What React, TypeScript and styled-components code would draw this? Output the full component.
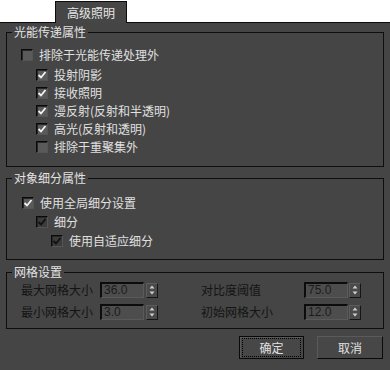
import React from 'react';
import styled, { createGlobalStyle, css } from 'styled-components';

const Global = createGlobalStyle`
  html, body { margin: 0; padding: 0; background: #ffffff; }
  body {
    font-family: "Noto Sans CJK SC", "Noto Sans", "Liberation Sans", sans-serif;
    font-size: 12px;
  }
`;

const Window = styled.div`
  width: 390px;
  height: 370px;
  display: flex;
  flex-direction: column;
  background: #ffffff;
`;

const TabBar = styled.div`
  height: 22px;
  display: flex;
  align-items: flex-end;
  padding-left: 55px;
  box-sizing: border-box;
`;

const Tab = styled.div`
  position: relative;
  z-index: 1;
  width: 72px;
  height: 22px;
  margin-bottom: -1px;
  box-sizing: border-box;
  background: #464646;
  border: 1px solid #0c0c0c;
  border-bottom: none;
  color: #e6e6e6;
  display: flex;
  align-items: center;
  justify-content: center;
  line-height: 14px;
`;

const Panel = styled.div`
  flex: 1;
  background: #454545;
  border-top: 1px solid #0c0c0c;
  padding: 2px 6px 0 6px;
  display: flex;
  flex-direction: column;
`;

const Group = styled.fieldset<{ $h: number; $gap: number }>`
  margin: ${(p) => p.$gap}px 0 0 0;
  padding: 0;
  min-width: 0;
  box-sizing: border-box;
  height: ${(p) => p.$h}px;
  border: 1px solid #0e0e0e;
  display: block;
`;

const Legend = styled.legend`
  margin-left: 5px;
  padding: 0 2px;
  line-height: 14px;
  color: #e2e2e2;
`;

const GroupBody = styled.div<{ $pt: number; $pl: number }>`
  padding-top: ${(p) => p.$pt}px;
  padding-left: ${(p) => p.$pl}px;
  display: flex;
  flex-direction: column;
`;

const CheckRow = styled.label<{ $indent: number; $h: number; $mt?: number }>`
  display: flex;
  align-items: center;
  gap: 6px;
  height: ${(p) => p.$h}px;
  margin-top: ${(p) => p.$mt ?? 0}px;
  padding-left: ${(p) => p.$indent}px;
  color: #e0e0e0;
  line-height: 14px;
  white-space: nowrap;
`;

const Box = styled.span<{ $disabled?: boolean }>`
  width: 12px;
  height: 12px;
  box-sizing: border-box;
  flex: none;
  display: flex;
  align-items: center;
  justify-content: center;
  border-style: solid;
  border-width: 1px;
  border-color: #0a0a0a #555555 #555555 #0a0a0a;
  background: ${(p) => (p.$disabled ? '#3b3b3b' : '#5a5a5a')};
  box-shadow: inset 1px 1px 0 #262626;
`;

const Check: React.FC<{ checked?: boolean; disabled?: boolean }> = ({ checked, disabled }) => (
  <Box $disabled={disabled}>
    {checked && (
      <svg width="10" height="10" viewBox="0 0 10 10">
        <path
          d="M1.5 5 L4 7.5 L8.5 2"
          fill="none"
          stroke={disabled ? '#111111' : '#f2f2f2'}
          strokeWidth="1.8"
        />
      </svg>
    )}
  </Box>
);

const FieldGrid = styled.div`
  display: grid;
  grid-template-columns: 180px 1fr;
  grid-auto-rows: 22px;
`;

const Field = styled.div`
  display: flex;
  align-items: center;
`;

const FieldLabel = styled.span<{ $w: number }>`
  width: ${(p) => p.$w}px;
  color: #141414;
  line-height: 14px;
  white-space: nowrap;
`;

const NumInput = styled.div`
  width: 44px;
  height: 16px;
  box-sizing: border-box;
  border-style: solid;
  border-width: 2px 1px 1px 2px;
  border-color: #0c0c0c #5a5a5a #5a5a5a #0c0c0c;
  background: #4d4d4d;
  color: #1c1c1c;
  font-family: "Liberation Sans", "Noto Sans", sans-serif;
  font-size: 12px;
  line-height: 13px;
  padding-left: 2px;
  display: flex;
  align-items: center;
`;

const Spin = styled.div<{ $ml: number }>`
  margin-left: ${(p) => p.$ml}px;
  width: 12px;
  height: 15px;
  box-sizing: border-box;
  display: grid;
  grid-template-rows: 1fr 1fr;
  border-style: solid;
  border-width: 1px;
  border-color: #5c5c5c #151515 #151515 #5c5c5c;
  background: #4a4a4a;
`;

const SpinHalf = styled.div`
  display: flex;
  align-items: center;
  justify-content: center;
`;

const Spinner: React.FC<{ ml: number }> = ({ ml }) => (
  <Spin $ml={ml}>
    <SpinHalf>
      <svg width="6" height="4" viewBox="0 0 6 4">
        <path d="M3 0.5 L5.5 3.5 L0.5 3.5 Z" fill="#cfcfcf" />
      </svg>
    </SpinHalf>
    <SpinHalf>
      <svg width="6" height="4" viewBox="0 0 6 4">
        <path d="M0.5 0.5 L5.5 0.5 L3 3.5 Z" fill="#cfcfcf" />
      </svg>
    </SpinHalf>
  </Spin>
);

const ButtonRow = styled.div`
  display: flex;
  justify-content: flex-end;
  gap: 13px;
  margin-top: 7px;
  padding-right: 1px;
`;

const Button = styled.div<{ $w: number; $default?: boolean }>`
  width: ${(p) => p.$w}px;
  height: 23px;
  box-sizing: border-box;
  display: flex;
  padding: 1px 2px;
  background: #474747;
  color: #e0e0e0;
  border-style: solid;
  border-width: 1px;
  border-color: #5a5a5a #0a0a0a #0a0a0a #5a5a5a;
  ${(p) =>
    p.$default &&
    css`
      border-color: #0a0a0a;
      box-shadow: inset 1px 1px 0 #5a5a5a;
    `}
`;

const ButtonText = styled.span<{ $focus?: boolean }>`
  flex: 1;
  display: flex;
  align-items: center;
  justify-content: center;
  border: 1px dotted ${(p) => (p.$focus ? '#000000' : 'transparent')};
  line-height: 14px;
`;

export default function App() {
  return (
    <Window>
      <Global />
      <TabBar>
        <Tab>高级照明</Tab>
      </TabBar>
      <Panel>
        <Group $h={142} $gap={0}>
          <Legend>光能传递属性</Legend>
          <GroupBody $pt={7} $pl={14}>
            <CheckRow $indent={0} $h={18}>
              <Check />
              排除于光能传递处理外
            </CheckRow>
            <CheckRow $indent={15} $h={18} $mt={2}>
              <Check checked />
              投射阴影
            </CheckRow>
            <CheckRow $indent={15} $h={18}>
              <Check checked />
              接收照明
            </CheckRow>
            <CheckRow $indent={15} $h={18}>
              <Check checked />
              漫反射(反射和半透明)
            </CheckRow>
            <CheckRow $indent={15} $h={18}>
              <Check checked />
              高光(反射和透明)
            </CheckRow>
            <CheckRow $indent={15} $h={18}>
              <Check />
              排除于重聚集外
            </CheckRow>
          </GroupBody>
        </Group>

        <Group $h={89} $gap={4}>
          <Legend>对象细分属性</Legend>
          <GroupBody $pt={8} $pl={14}>
            <CheckRow $indent={1} $h={19}>
              <Check checked />
              使用全局细分设置
            </CheckRow>
            <CheckRow $indent={15} $h={19}>
              <Check checked disabled />
              细分
            </CheckRow>
            <CheckRow $indent={30} $h={19}>
              <Check checked disabled />
              使用自适应细分
            </CheckRow>
          </GroupBody>
        </Group>

        <Group $h={64} $gap={5}>
          <Legend>网格设置</Legend>
          <GroupBody $pt={0} $pl={14}>
            <FieldGrid>
              <Field>
                <FieldLabel $w={79}>最大网格大小</FieldLabel>
                <NumInput>36.0</NumInput>
                <Spinner ml={2} />
              </Field>
              <Field>
                <FieldLabel $w={103}>对比度阈值</FieldLabel>
                <NumInput>75.0</NumInput>
                <Spinner ml={1} />
              </Field>
              <Field>
                <FieldLabel $w={79}>最小网格大小</FieldLabel>
                <NumInput>3.0</NumInput>
                <Spinner ml={2} />
              </Field>
              <Field>
                <FieldLabel $w={103}>初始网格大小</FieldLabel>
                <NumInput>12.0</NumInput>
                <Spinner ml={1} />
              </Field>
            </FieldGrid>
          </GroupBody>
        </Group>

        <ButtonRow>
          <Button $w={65} $default>
            <ButtonText $focus>确定</ButtonText>
          </Button>
          <Button $w={66}>
            <ButtonText>取消</ButtonText>
          </Button>
        </ButtonRow>
      </Panel>
    </Window>
  );
}
